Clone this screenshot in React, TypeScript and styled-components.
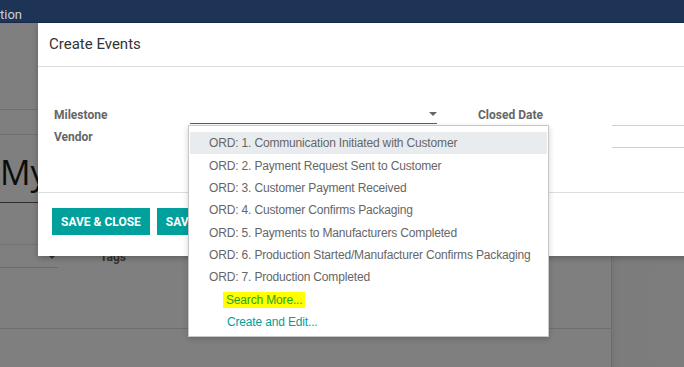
import React from 'react'
import styled, { createGlobalStyle } from 'styled-components'

const GlobalStyle = createGlobalStyle`
  html, body {
    margin: 0;
    padding: 0;
    background: #7f7f7f;
  }
  * {
    box-sizing: border-box;
  }
`

const Screen = styled.div`
  position: relative;
  width: 684px;
  height: 367px;
  overflow: hidden;
  background: #7f7f7f;
  font-family: Roboto, 'Liberation Sans', sans-serif;
`

const NavBar = styled.div`
  height: 23px;
  background: #1e3457;
  border-bottom: 1px solid #16284a;
  display: flex;
  align-items: flex-start;
  padding-top: 7px;
  color: #c9d0dc;
  font-size: 13px;
  line-height: 15px;
`

const PageBody = styled.div`
  display: grid;
  grid-template-columns: 612px 1fr;
  height: 344px;
`

const MainColumn = styled.div`
  display: flex;
  flex-direction: column;
  border-right: 1px solid #6c6c6c;
`

const SidePanel = styled.div`
  background: linear-gradient(90deg, #767676 0, #7c7c7c 6px, #7d7d7d 100%);
`

const Band = styled.div<{ $h: number; $line?: string }>`
  height: ${p => p.$h}px;
  flex: none;
  border-bottom: 1px solid ${p => p.$line ?? '#6e6e6e'};
`

const BigTitle = styled.div`
  height: 68px;
  flex: none;
  border-bottom: 1px solid #2e2e2e;
  font-family: 'Open Sans', 'Liberation Sans', sans-serif;
  font-size: 34px;
  color: #0d0d0d;
  padding-top: 17px;
  line-height: 40px;
  white-space: nowrap;
`

const FieldRow = styled.div`
  height: 84px;
  flex: none;
  display: flex;
  align-items: flex-start;
  padding-top: 2px;
  border-bottom: 1px solid #6e6e6e;
`

const GhostField = styled.div<{ $w: number }>`
  width: ${p => p.$w}px;
  height: 21px;
  flex: none;
  border-bottom: 1px solid #6a6a6a;
  display: flex;
  justify-content: flex-end;
  align-items: center;
  padding-right: 2px;
`

const GhostLabel = styled.div`
  margin: 3px 0 0 42px;
  width: 395px;
  font-size: 12px;
  font-weight: 700;
  color: #333;
`

const Caret = styled.span<{ $color?: string }>`
  width: 0;
  height: 0;
  border-left: 4px solid transparent;
  border-right: 4px solid transparent;
  border-top: 4px solid ${p => p.$color ?? '#333'};
`

const Modal = styled.div`
  position: absolute;
  left: 38px;
  top: 23px;
  width: 660px;
  height: 233px;
  background: #fff;
  box-shadow: 0 2px 6px rgba(0, 0, 0, 0.25);
  display: flex;
  flex-direction: column;
`

const ModalHeader = styled.div`
  height: 44px;
  flex: none;
  padding: 0 0 1px 11px;
  display: flex;
  align-items: center;
  font-size: 15px;
  color: #333;
  border-bottom: 1px solid #dadfe4;
`

const ModalBody = styled.div`
  height: 126px;
  flex: none;
  padding: 37px 0 0 16px;
  border-bottom: 1px solid #dadfe4;
  display: grid;
  grid-template-columns: 136px 247px 41px 134px 1fr;
  grid-auto-rows: 22px;
  align-items: center;
`

const Label = styled.div`
  font-size: 12px;
  font-weight: 700;
  color: #666;
  white-space: nowrap;
`

const SelectField = styled.div`
  align-self: start;
  height: 20px;
  border-bottom: 1px solid #5e5e5e;
  display: flex;
  justify-content: flex-end;
  align-items: center;
`

const LineInput = styled.div`
  align-self: start;
  height: 22px;
  border-bottom: 1px solid #d0d0d0;
`

const ModalFooter = styled.div`
  flex: 1;
  padding: 15px 0 0 14px;
  display: flex;
  align-items: flex-start;
  gap: 7px;
`

const Button = styled.button`
  height: 27px;
  padding: 0 9px;
  border: none;
  border-radius: 0;
  background: #00a09d;
  color: #fff;
  font-family: Roboto, 'Liberation Sans', sans-serif;
  font-size: 12px;
  font-weight: 700;
  text-transform: uppercase;
  white-space: nowrap;
`

const Dropdown = styled.ul`
  position: absolute;
  left: 188px;
  top: 125px;
  width: 361px;
  height: 212px;
  margin: 0;
  padding: 6px 0 0 1px;
  list-style: none;
  background: #fff;
  border: 1px solid #c8c8c8;
  box-shadow: 0 2px 6px rgba(0, 0, 0, 0.18);
`

const Option = styled.li<{ $active?: boolean; $indent?: number }>`
  height: 22.35px;
  display: flex;
  align-items: center;
  padding-left: ${p => p.$indent ?? 19}px;
  margin-right: 1px;
  font-family: 'Liberation Sans', Arial, sans-serif;
  font-size: 12px;
  letter-spacing: -0.16px;
  color: #666;
  white-space: nowrap;
  background: ${p => (p.$active ? '#e9ecef' : 'transparent')};
`

const Highlight = styled.span`
  background: #ffff00;
  color: #1ea51e;
  padding: 1px 3px;
`

const CreateLink = styled.span`
  color: #00a09d;
`

const options = [
  'ORD: 1. Communication Initiated with Customer',
  'ORD: 2. Payment Request Sent to Customer',
  'ORD: 3. Customer Payment Received',
  'ORD: 4. Customer Confirms Packaging',
  'ORD: 5. Payments to Manufacturers Completed',
  'ORD: 6. Production Started/Manufacturer Confirms Packaging',
  'ORD: 7. Production Completed',
]

export default function App() {
  return (
    <Screen>
      <GlobalStyle />
      <NavBar>tion</NavBar>

      <PageBody>
        <MainColumn>
          <Band $h={87} />
          <Band $h={25} />
          <BigTitle>My</BigTitle>
          <Band $h={42} $line="#737373" />
          <FieldRow>
            <GhostField $w={58}>
              <Caret />
            </GhostField>
            <GhostLabel>Tags</GhostLabel>
            <GhostField $w={16}>
              <Caret />
            </GhostField>
          </FieldRow>
        </MainColumn>
        <SidePanel />
      </PageBody>

      <Modal>
        <ModalHeader>Create Events</ModalHeader>
        <ModalBody>
          <Label>Milestone</Label>
          <SelectField>
            <Caret $color="#666" />
          </SelectField>
          <span />
          <Label>Closed Date</Label>
          <LineInput />
          <Label>Vendor</Label>
          <span />
          <span />
          <span />
          <LineInput />
        </ModalBody>
        <ModalFooter>
          <Button>Save &amp; Close</Button>
          <Button>Save &amp; New</Button>
        </ModalFooter>
      </Modal>

      <Dropdown>
        {options.map((o, i) => (
          <Option key={o} $active={i === 0}>
            {o}
          </Option>
        ))}
        <Option $indent={33}>
          <Highlight>Search More...</Highlight>
        </Option>
        <Option $indent={37}>
          <CreateLink>Create and Edit...</CreateLink>
        </Option>
      </Dropdown>
    </Screen>
  )
}
